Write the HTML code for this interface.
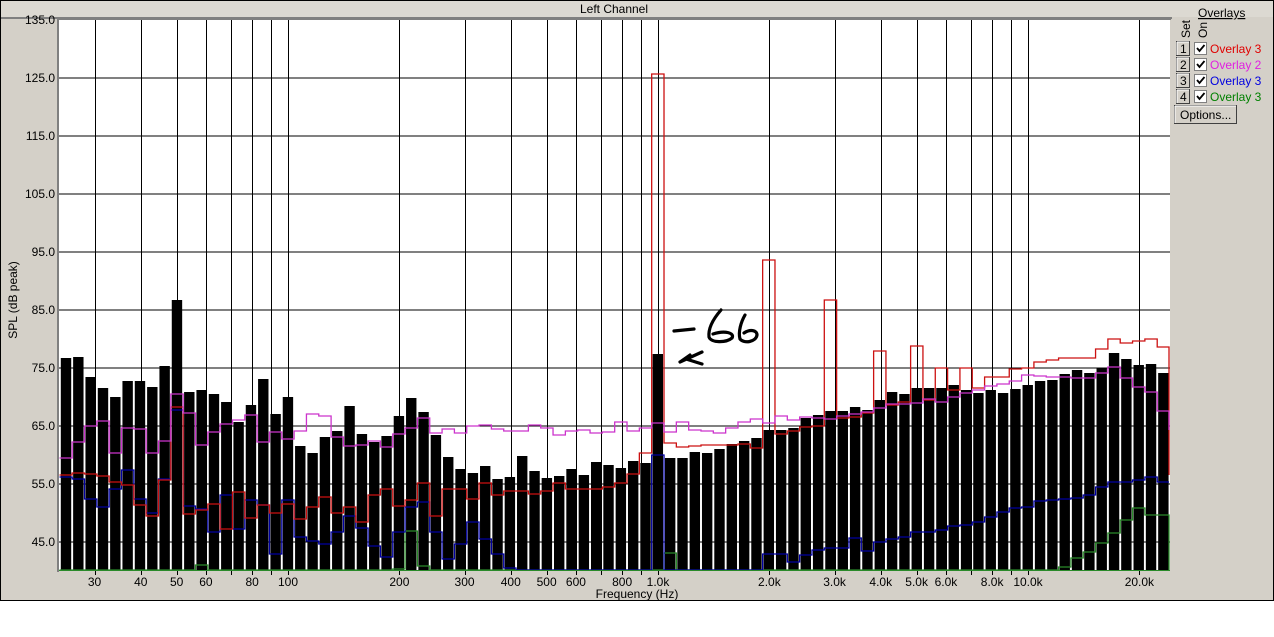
<!DOCTYPE html>
<html><head><meta charset="utf-8">
<style>
html,body{margin:0;padding:0;background:#fff;}
body{width:1274px;height:637px;overflow:hidden;position:relative;font-family:"Liberation Sans",sans-serif;}
</style></head>
<body>
<svg id="s" width="1274" height="637" xmlns="http://www.w3.org/2000/svg" style="position:absolute;left:0;top:0" font-family="Liberation Sans, sans-serif" font-size="12">
<rect x="0" y="0" width="1274" height="601" fill="#d4d0c8"/>
<rect x="0" y="0" width="1274" height="17" fill="#dcd9d2"/>
<line x1="0" y1="18" x2="1172" y2="18" stroke="#808080" stroke-width="2"/>
<rect x="0.5" y="0.5" width="1273" height="600" fill="none" stroke="#000"/>
<text x="614" y="13" text-anchor="middle">Left Channel</text>
<rect x="59" y="20" width="1111" height="551" fill="#fff"/>
<g id="g"></g>
<line x1="58" y1="19" x2="58" y2="572" stroke="#808080" stroke-width="2"/>
<line x1="58" y1="19.5" x2="1171" y2="19.5" stroke="#808080"/>
<text transform="translate(17,300) rotate(-90)" text-anchor="middle">SPL (dB peak)</text>
<text x="637" y="598" text-anchor="middle">Frequency (Hz)</text>
<g fill="none" stroke="#000" stroke-width="3.2" stroke-linecap="round" stroke-linejoin="round">
<path d="M674 331 L694 329"/>
<path d="M721 310 C714 318 708 328 709 337 C711 343 726 343 732 338 C735 333 725 330 713 334"/>
<path d="M745 315 C741 322 738 332 740 339 C744 344 756 342 757 335 C757 330 750 329 744 333"/>
<path d="M702 352 L680 362 M686 359 L702 364 M690 355 L680 362"/>
</g>
<text x="1198" y="17" font-size="12" text-decoration="underline">Overlays</text>
<text transform="translate(1190,38) rotate(-90)" font-size="12">Set</text>
<text transform="translate(1207,38) rotate(-90)" font-size="12">On</text>
<g id="leg"></g>
<rect x="1174.5" y="105.5" width="62" height="18" fill="#d4d0c8" stroke="#404040"/>
<line x1="1175" y1="106" x2="1236" y2="106" stroke="#fff"/><line x1="1175" y1="106" x2="1175" y2="123" stroke="#fff"/>
<text x="1180" y="119">Options...</text>
</svg>
<script>
var g=document.getElementById('g'),h='';
function X(f){return 288+(Math.log10(f)-2)*370;}
[125,115,105,95,85,75,65,55,45].forEach(function(v){var y=20+(135-v)*5.8;h+='<line x1="59" y1="'+y+'" x2="1170" y2="'+y+'" stroke="#000"/>';});
var fr=[30,40,50,60,70,80,90,100,200,300,400,500,600,700,800,900,1000,2000,3000,4000,5000,6000,7000,8000,9000,10000,20000];
fr.forEach(function(f){var x=Math.round(X(f))+0.5;h+='<line x1="'+x+'" y1="20" x2="'+x+'" y2="575" stroke="#000"/>';});
var bars=[358,357,377,388,397,381,381,387,366,300,392,390,394,402,422,405,379,414,397,446,453,437,431,406,434,442,436,416,398,412,435,457,469,473,466,479,477,456,471,478,476,469,475,462,465,468,461,463,354,458,458,452,453,449,444,441,438,430,430,428,418,415,411,411,407,410,400,392,394,388,388,388,385,390,393,390,393,389,385,381,380,374,370,373,368,353,359,365,364,373];
var P=12.33;function C(n){return 66+n*P;}
bars.forEach(function(y,i){var c=C(i);h+='<rect x="'+(c-5.2)+'" y="'+y+'" width="10.4" height="'+(571-y)+'" fill="#000"/>';});
function step(a,col,endY){var d='M'+(C(0)-6.5)+' '+a[0];a.forEach(function(y,i){if(i>0)d+=' V'+y;d+=' H'+Math.min(C(i)+6.17,1169);});if(endY)d+=' V'+endY;return '<path d="'+d+'" fill="none" stroke="'+col+'" stroke-width="1.3"/>';}
var red=[475,473,474,476,482,485,505,516,480,407,514,510,504,529,492,518,505,513,504,519,507,497,513,507,522,495,489,506,500,483,516,489,489,499,483,495,491,491,494,491,483,489,489,489,487,483,474,453,74,443,447,446,445,445,445,444,448,260,434,431,427,426,300,418,417,413,351,405,402,346,400,368,390,368,388,377,377,369,368,362,360,358,358,358,349,339,343,341,339,347];
var mag=[458,442,426,421,453,428,429,453,441,394,413,445,432,424,420,415,442,432,439,431,414,416,437,446,445,441,447,434,428,418,433,429,433,426,425,429,431,431,425,428,435,431,430,433,432,422,431,428,423,432,422,430,431,433,428,422,419,423,416,420,417,418,419,416,414,412,408,404,404,403,399,402,397,393,390,386,384,381,375,376,377,377,378,378,373,367,378,387,392,411];
var blue=[477,479,499,507,489,470,499,513,479,410,506,509,532,495,529,500,505,554,500,537,541,544,532,516,528,546,557,532,507,502,532,559,544,522,539,554,568,570,570,570,570,570,570,570,570,570,570,570,455,570,570,570,570,570,570,570,570,554,554,562,555,550,548,548,538,551,542,539,537,532,532,530,526,525,522,517,512,508,507,501,500,499,498,495,487,482,482,480,477,482];
var grn=[];for(var i=0;i<90;i++)grn.push(570);
grn[11]=565;grn[27]=569;grn[28]=531;grn[29]=566;grn[49]=553;
[[81,567],[82,558],[83,552],[84,543],[85,533],[86,520],[87,508],[88,515],[89,515]].forEach(function(p){grn[p[0]]=p[1];});
h+=step(grn,'#2a8a2a',570);
h+=step(blue,'#0000a0');
h+=step(red,'#cc1111',475);
h+=step(mag,'#cc33cc',430);
h+='<line x1="59" y1="570.5" x2="1170" y2="570.5" stroke="#2a8a2a"/>';
[135,125,115,105,95,85,75,65,55,45].forEach(function(v){var y=20+(135-v)*5.8;h+='<text x="55" y="'+(y+4)+'" text-anchor="end">'+v.toFixed(1)+'</text>';});
var lab=[[30,'30'],[40,'40'],[50,'50'],[60,'60'],[80,'80'],[100,'100'],[200,'200'],[300,'300'],[400,'400'],[500,'500'],[600,'600'],[800,'800'],[1000,'1.0k'],[2000,'2.0k'],[3000,'3.0k'],[4000,'4.0k'],[5000,'5.0k'],[6000,'6.0k'],[8000,'8.0k'],[10000,'10.0k'],[20000,'20.0k']];
lab.forEach(function(l){h+='<text x="'+X(l[0])+'" y="586" text-anchor="middle">'+l[1]+'</text>';});
g.innerHTML=h;
var L='',cols=['#e00000','#e020e0','#0000e0','#008000'],nm=['Overlay 3','Overlay 2','Overlay 3','Overlay 3'];
for(var k=0;k<4;k++){var y=41+k*16;
L+='<rect x="1176.5" y="'+(y+0.5)+'" width="13" height="14" fill="#d4d0c8" stroke="#404040"/><line x1="1177" y1="'+(y+1)+'" x2="1189" y2="'+(y+1)+'" stroke="#fff"/><line x1="1177" y1="'+(y+1)+'" x2="1177" y2="'+(y+14)+'" stroke="#fff"/>';
L+='<text x="1180" y="'+(y+12)+'">'+(k+1)+'</text>';
L+='<rect x="1194.5" y="'+(y+1.5)+'" width="12" height="12" fill="#fff" stroke="#808080"/><path d="M1197 '+(y+7)+' l2.5 3 l5 -6" fill="none" stroke="#000" stroke-width="1.8"/>';
L+='<text x="1210" y="'+(y+12)+'" fill="'+cols[k]+'">'+nm[k]+'</text>';}
document.getElementById('leg').innerHTML=L;
</script>
</body></html>
